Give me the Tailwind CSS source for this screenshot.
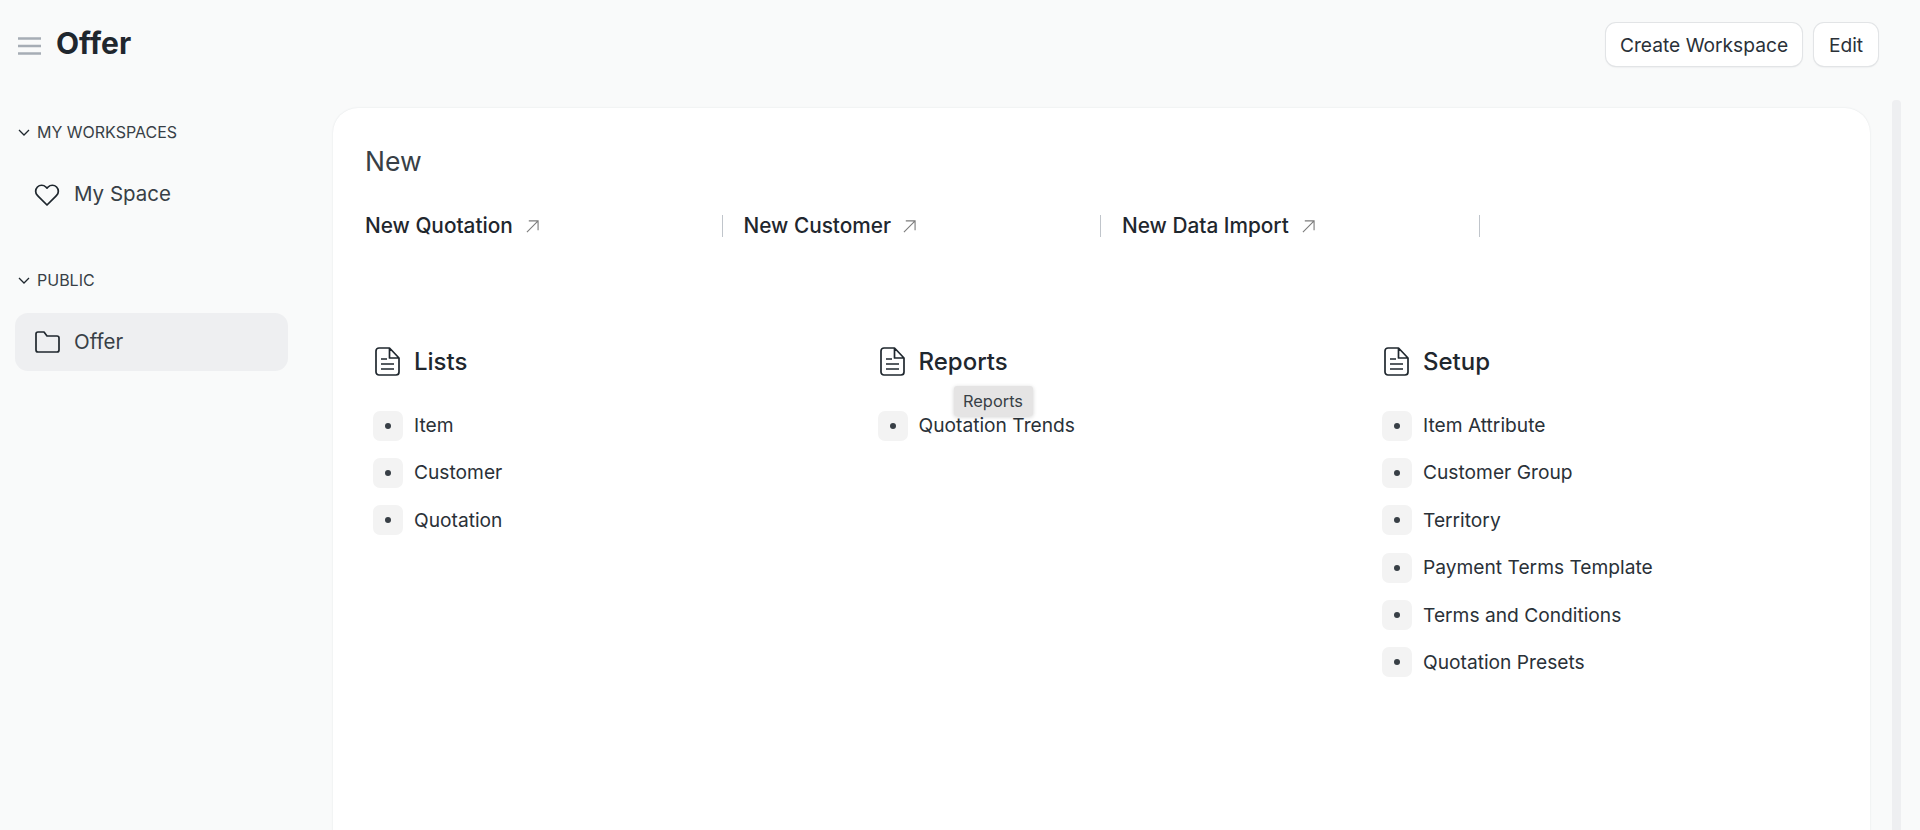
<!DOCTYPE html>
<html lang="en">
<head>
    <meta charset="UTF-8">
    <title>Offer</title>
    <script src="https://cdn.jsdelivr.net/npm/@tailwindcss/browser@4"></script>
</head>
<body class="h-[830px] w-[1920px] overflow-hidden bg-[#f9fafa] font-['Inter',sans-serif] text-[#1f272e] antialiased">
    <!-- Page header -->
    <header class="flex h-[88px] items-start justify-between pl-[18px] pr-[42px]">
        <div class="flex h-[88px] items-center pb-[2px]">
            <svg class="mr-[15px] mt-[6px] h-[22px] w-[23px]" viewBox="0 0 23 22" fill="none" stroke="#a6adb5" stroke-width="2.4">
                <path d="M0 3.500h23M0 11h23M0 18.500h23"/>
            </svg>
            <h1 class="text-[30px] font-bold leading-none">Offer</h1>
        </div>
        <div class="flex gap-[12px] pt-[23px]">
            <button class="h-[43px] w-[196px] rounded-[10px] bg-white pt-[2px] text-[19.200px] text-[#2a3138] shadow-[0_0_0_1px_#e2e4e6,0_1px_2px_#d8dadc]">Create Workspace</button>
            <button class="h-[43px] w-[64px] rounded-[10px] bg-white pt-[2px] text-[19.200px] text-[#2a3138] shadow-[0_0_0_1px_#e2e4e6,0_1px_2px_#d8dadc]">Edit</button>
        </div>
    </header>

    <div class="flex">
        <!-- Sidebar -->
        <aside class="w-[333px] shrink-0 pl-[15px]">
            <div class="mt-[30px] flex h-[28px] items-center pl-[3px] text-[16px] text-[#383f46]">
                <svg class="mr-[7px] h-[12px] w-[12px]" viewBox="0 0 12 12" fill="none" stroke="#1f272e" stroke-width="1.3"><path d="M1 4l5 5 5-5"/></svg>
                MY WORKSPACES
            </div>
            <div class="mt-[19px] flex h-[58px] w-[273px] items-center pl-[19px] text-[20.500px] text-[#383f46]">
                <svg class="mr-[14px] mt-[2px] h-[26px] w-[26px]" viewBox="0 0 24 24" fill="none" stroke="#1f272e" stroke-width="1.600" stroke-linejoin="round"><path d="M20.840 4.610a5.500 5.500 0 0 0-7.780 0L12 5.670l-1.060-1.060a5.500 5.500 0 0 0-7.780 7.780l1.060 1.060L12 21.230l7.780-7.780 1.060-1.060a5.500 5.500 0 0 0 0-7.780z"/></svg>
                My Space
            </div>
            <div class="mt-[43px] flex h-[28px] items-center pl-[3px] text-[16px] text-[#383f46]">
                <svg class="mr-[7px] h-[12px] w-[12px]" viewBox="0 0 12 12" fill="none" stroke="#1f272e" stroke-width="1.3"><path d="M1 4l5 5 5-5"/></svg>
                PUBLIC
            </div>
            <div class="mt-[19px] flex h-[58px] w-[273px] items-center rounded-[13px] bg-[#eeeff1] pl-[20px] text-[20.500px] text-[#383f46]">
                <svg class="mr-[14px] h-[24px] w-[25px]" viewBox="0 0 25 24" fill="none" stroke="#1f272e" stroke-width="1.7" stroke-linejoin="round"><path d="M1 4a2 2 0 0 1 2-2h6l3 4h10a2 2 0 0 1 2 2v12a2 2 0 0 1-2 2H3a2 2 0 0 1-2-2z"/></svg>
                Offer
            </div>
        </aside>

        <!-- Main card -->
        <main class="mt-[20px] h-[760px] w-[1537px] shrink-0 rounded-[25px] bg-white pl-[32px] pt-[37px] shadow-[0_0_2px_#dfe2e4]">
            <h2 class="h-[32px] text-[26.500px] leading-[32px] text-[#383f46]">New</h2>

            <div class="mt-[33px] flex h-[32px] items-center">
                <div class="flex h-[22px] w-[357.500px] items-center border-r border-[#c0c5cb]">
                    <span class="text-[20.800px] font-medium">New Quotation</span>
                    <svg class="ml-[13px] h-[13px] w-[13px]" viewBox="0 0 14 14" fill="none" stroke="#7c7c7c" stroke-width="1.2"><path d="M1 13 13 1M3 1h10v10"/></svg>
                </div>
                <div class="ml-[21px] flex h-[22px] w-[357.500px] items-center border-r border-[#c0c5cb]">
                    <span class="text-[20.800px] font-medium">New Customer</span>
                    <svg class="ml-[12px] h-[13px] w-[13px]" viewBox="0 0 14 14" fill="none" stroke="#7c7c7c" stroke-width="1.2"><path d="M1 13 13 1M3 1h10v10"/></svg>
                </div>
                <div class="ml-[21px] flex h-[22px] w-[358px] items-center border-r border-[#c0c5cb]">
                    <span class="text-[20.800px] font-medium">New Data Import</span>
                    <svg class="ml-[13px] h-[13px] w-[13px]" viewBox="0 0 14 14" fill="none" stroke="#7c7c7c" stroke-width="1.2"><path d="M1 13 13 1M3 1h10v10"/></svg>
                </div>
            </div>

            <div class="mt-[104px] grid grid-cols-[504.500px_504.500px_504px] pl-[8px]">
                <section>
                    <div class="flex h-[32px] items-center text-[24px] font-medium">
                        <svg class="-mt-[2px] ml-[2px] mr-[14px] h-[29px] w-[25px]" viewBox="0 0 25 29" fill="none" stroke="#1f272e" stroke-width="1.700" stroke-linejoin="round"><path d="M4 1h10.500L24 11v14a3 3 0 0 1-3 3H4a3 3 0 0 1-3-3V4a3 3 0 0 1 3-3zM14.500 1v10H24M6 12h6M6 17h13M6 22h13"/></svg>
                        Lists
                    </div>
                    <ul class="mt-[32.500px] flex flex-col gap-[17.400px] text-[19.200px] text-[#2a3138]">
                        <li class="flex h-[30px] items-center"><span class="mr-[11px] flex h-[30px] w-[30px] items-center justify-center rounded-[7px] bg-[#f3f3f3]"><span class="h-[6px] w-[6px] rounded-full bg-[#383f46]"></span></span>Item</li>
                        <li class="flex h-[30px] items-center"><span class="mr-[11px] flex h-[30px] w-[30px] items-center justify-center rounded-[7px] bg-[#f3f3f3]"><span class="h-[6px] w-[6px] rounded-full bg-[#383f46]"></span></span>Customer</li>
                        <li class="flex h-[30px] items-center"><span class="mr-[11px] flex h-[30px] w-[30px] items-center justify-center rounded-[7px] bg-[#f3f3f3]"><span class="h-[6px] w-[6px] rounded-full bg-[#383f46]"></span></span>Quotation</li>
                    </ul>
                </section>
                <section class="relative">
                    <div class="flex h-[32px] items-center text-[24px] font-medium">
                        <svg class="-mt-[2px] ml-[2px] mr-[14px] h-[29px] w-[25px]" viewBox="0 0 25 29" fill="none" stroke="#1f272e" stroke-width="1.700" stroke-linejoin="round"><path d="M4 1h10.500L24 11v14a3 3 0 0 1-3 3H4a3 3 0 0 1-3-3V4a3 3 0 0 1 3-3zM14.500 1v10H24M6 12h6M6 17h13M6 22h13"/></svg>
                        Reports
                    </div>
                    <ul class="mt-[32.500px] flex flex-col gap-[17.400px] text-[19.200px] text-[#2a3138]">
                        <li class="flex h-[30px] items-center"><span class="mr-[11px] flex h-[30px] w-[30px] items-center justify-center rounded-[7px] bg-[#f3f3f3]"><span class="h-[6px] w-[6px] rounded-full bg-[#383f46]"></span></span>Quotation Trends</li>
                    </ul>
                    <!-- Tooltip -->
                    <div class="absolute left-[76px] top-[40px] flex h-[30px] w-[79px] items-center justify-center rounded-[3px] bg-[#e5e4e4] text-[16.400px] text-[#383f46] shadow-[0_1px_4px_rgba(0,0,0,0.18)]">Reports</div>
                </section>
                <section>
                    <div class="flex h-[32px] items-center text-[24px] font-medium">
                        <svg class="-mt-[2px] ml-[2px] mr-[14px] h-[29px] w-[25px]" viewBox="0 0 25 29" fill="none" stroke="#1f272e" stroke-width="1.700" stroke-linejoin="round"><path d="M4 1h10.500L24 11v14a3 3 0 0 1-3 3H4a3 3 0 0 1-3-3V4a3 3 0 0 1 3-3zM14.500 1v10H24M6 12h6M6 17h13M6 22h13"/></svg>
                        Setup
                    </div>
                    <ul class="mt-[32.500px] flex flex-col gap-[17.400px] text-[19.200px] text-[#2a3138]">
                        <li class="flex h-[30px] items-center"><span class="mr-[11px] flex h-[30px] w-[30px] items-center justify-center rounded-[7px] bg-[#f3f3f3]"><span class="h-[6px] w-[6px] rounded-full bg-[#383f46]"></span></span>Item Attribute</li>
                        <li class="flex h-[30px] items-center"><span class="mr-[11px] flex h-[30px] w-[30px] items-center justify-center rounded-[7px] bg-[#f3f3f3]"><span class="h-[6px] w-[6px] rounded-full bg-[#383f46]"></span></span>Customer Group</li>
                        <li class="flex h-[30px] items-center"><span class="mr-[11px] flex h-[30px] w-[30px] items-center justify-center rounded-[7px] bg-[#f3f3f3]"><span class="h-[6px] w-[6px] rounded-full bg-[#383f46]"></span></span>Territory</li>
                        <li class="flex h-[30px] items-center"><span class="mr-[11px] flex h-[30px] w-[30px] items-center justify-center rounded-[7px] bg-[#f3f3f3]"><span class="h-[6px] w-[6px] rounded-full bg-[#383f46]"></span></span>Payment Terms Template</li>
                        <li class="flex h-[30px] items-center"><span class="mr-[11px] flex h-[30px] w-[30px] items-center justify-center rounded-[7px] bg-[#f3f3f3]"><span class="h-[6px] w-[6px] rounded-full bg-[#383f46]"></span></span>Terms and Conditions</li>
                        <li class="flex h-[30px] items-center"><span class="mr-[11px] flex h-[30px] w-[30px] items-center justify-center rounded-[7px] bg-[#f3f3f3]"><span class="h-[6px] w-[6px] rounded-full bg-[#383f46]"></span></span>Quotation Presets</li>
                    </ul>
                </section>
            </div>
        </main>

        <!-- Scrollbar -->
        <div class="ml-[22px] mt-[12px] h-[760px] w-[9px] shrink-0 rounded-t-[4px] bg-[#eeeff1]"></div>
    </div>
</body>
</html>
